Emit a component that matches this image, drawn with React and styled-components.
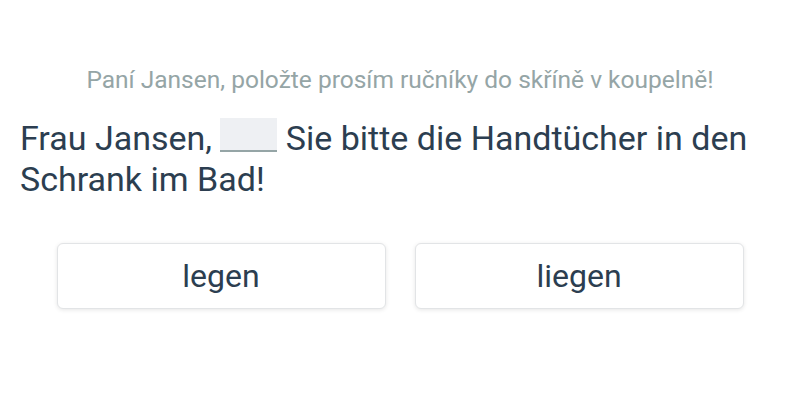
import React from 'react';
import styled, { createGlobalStyle } from 'styled-components';

const GlobalStyle = createGlobalStyle`
  html, body {
    margin: 0;
    padding: 0;
    background: #ffffff;
  }
  body {
    font-family: Roboto, "Noto Sans", sans-serif;
  }
`;

const Exercise = styled.div`
  width: 800px;
  height: 400px;
  box-sizing: border-box;
  padding: 64px 20px 0;
`;

const Hint = styled.p`
  margin: 0;
  text-align: center;
  font-size: 24.5px;
  line-height: 32px;
  color: #95a5a6;
`;

const Sentence = styled.p`
  margin: 22px 0 0;
  font-size: 34px;
  line-height: 41px;
  color: #2c3e50;
`;

const Blank = styled.span`
  display: inline-block;
  width: 57px;
  height: 34px;
  box-sizing: border-box;
  background: #eef0f3;
  border-bottom: 2px solid #95a5a6;
  vertical-align: -2px;
`;

const Options = styled.div`
  display: flex;
  justify-content: center;
  gap: 29px;
  margin-top: 43px;
`;

const Option = styled.button`
  width: 329px;
  height: 66px;
  background: #ffffff;
  border: 1px solid #e2e4e6;
  border-radius: 6px;
  box-shadow: 0 1px 4px rgba(0, 0, 0, 0.1);
  font-family: Roboto, "Noto Sans", sans-serif;
  font-size: 32px;
  color: #2c3e50;
  cursor: pointer;
`;

export default function App() {
  return (
    <>
      <GlobalStyle />
      <Exercise>
        <Hint>Paní Jansen, položte prosím ručníky do skříně v koupelně!</Hint>
        <Sentence>
          Frau Jansen, <Blank /> Sie bitte die Handtücher in den Schrank im Bad!
        </Sentence>
        <Options>
          <Option>legen</Option>
          <Option>liegen</Option>
        </Options>
      </Exercise>
    </>
  );
}
